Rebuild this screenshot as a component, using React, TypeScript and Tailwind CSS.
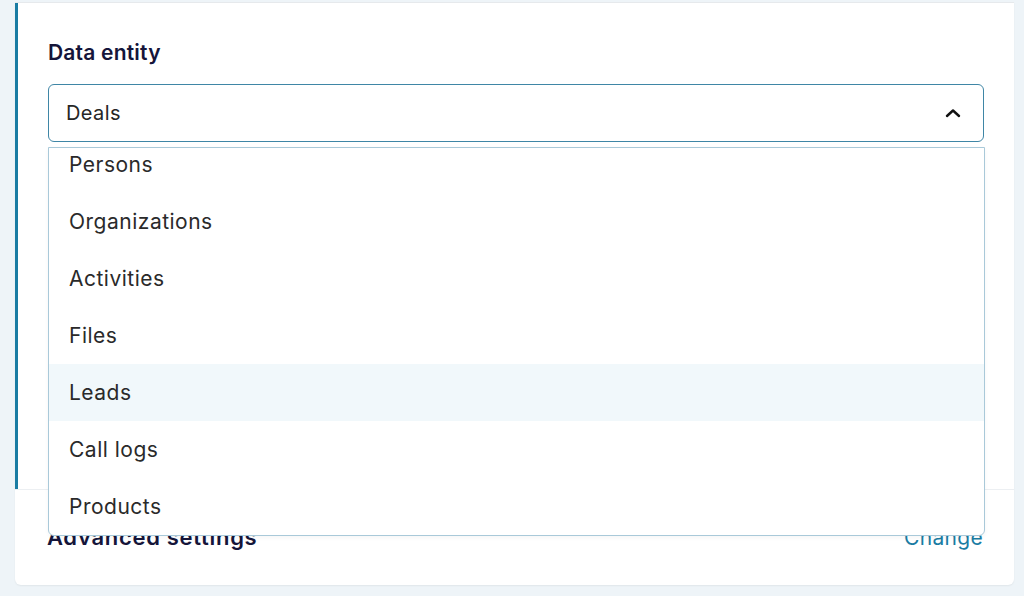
import React from "react";

const options = ["Persons", "Organizations", "Activities", "Files", "Leads", "Call logs", "Products"];

export default function App() {
  return (
    <div
      className="h-[596px] w-[1024px] overflow-hidden bg-[#eef4f8] pt-[2px]"
      style={{ fontFamily: "Inter, 'Noto Sans', sans-serif" }}
    >
      <div className="ml-[15px] w-[999px] bg-white border-t border-[#e6e9ec] rounded-b-[6px] shadow-[0_1px_2px_rgba(0,0,0,0.06)]">
        <div className="relative h-[486px] border-l-[3px] border-[#1a7ca3] pl-[30px] pr-[30px] pt-[36px]">
          <div className="text-[21px] leading-[28px] font-semibold tracking-[0.2px] text-[#15153a]">Data entity</div>
          <div className="mt-[17px] flex h-[58px] items-center justify-between rounded-[6px] border border-[#3f86a6] pl-[17px] pr-[22px]">
            <span className="text-[20px] tracking-[0.4px] text-[#262626]">Deals</span>
            <svg width="16" height="10" viewBox="0 0 16 10" fill="none">
              <path d="M2 8 L8 2.5 L14 8" stroke="#111" strokeWidth="2.4" strokeLinecap="round" strokeLinejoin="round" />
            </svg>
          </div>
        </div>
        <div className="flex h-[96px] items-center justify-between border-t border-[#eceff2] pl-[32px] pr-[31px]">
          <span className="text-[22px] font-semibold tracking-[0.7px] text-[#15153a]">Advanced settings</span>
          <span className="text-[21px] tracking-[0.3px] text-[#1a7ca3]">Change</span>
        </div>
      </div>
      <div className="absolute left-[48px] top-[147px] h-[389px] w-[937px] overflow-hidden rounded-b-[6px] border border-[#a9c9d9] bg-white shadow-[0_2px_4px_rgba(0,0,0,0.04)]">
        <div className="-mt-[12px]">
          {options.map((o) => (
            <div
              key={o}
              className={`flex h-[57px] items-center pl-[20px] text-[21px] tracking-[0.5px] text-[#2a2a2a] ${o === "Leads" ? "bg-[#f1f8fb]" : ""}`}
            >
              {o}
            </div>
          ))}
        </div>
      </div>
    </div>
  );
}
